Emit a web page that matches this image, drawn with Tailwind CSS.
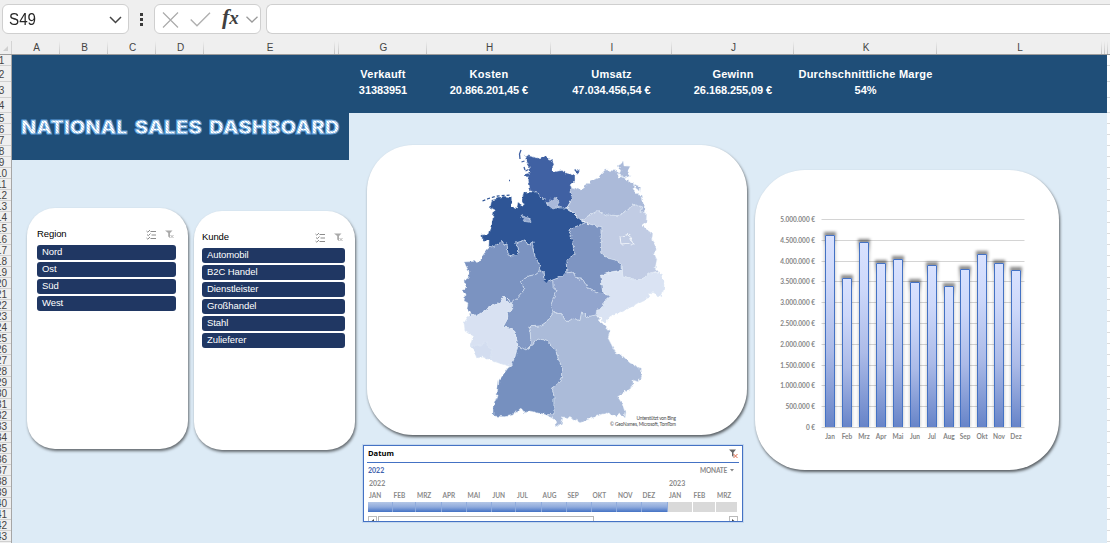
<!DOCTYPE html>
<html lang="de">
<head>
<meta charset="utf-8">
<title>National Sales Dashboard</title>
<script src="https://cdn.jsdelivr.net/npm/@tailwindcss/browser@4"></script>
</head>
<body class="w-[1110px] h-[543px] overflow-hidden bg-[#efefef] font-['Liberation_Sans',sans-serif] flex flex-col">

<!-- Formula bar -->
<header class="h-[41px] shrink-0 flex items-start pt-1 pl-[2px] bg-[#efefef]">
  <div class="w-[127px] h-[30px] rounded-md border border-[#cfcfcf] bg-white flex items-center justify-between pl-[6px] pr-[6px]">
    <span class="text-[16px] leading-none text-[#262626] origin-left scale-x-[.95] mt-px">S49</span>
    <svg class="w-[13px] h-[8px] mt-[2px]" viewBox="0 0 13 8" fill="none" stroke="#444" stroke-width="1.5"><path d="M1 1l5.5 5.5L12 1"/></svg>
  </div>
  <svg class="w-[3px] h-[13px] ml-[11px] mt-[9px]" viewBox="0 0 3 13" fill="#3a3a3a"><path d="M0 0h3v3H0zM0 5h3v3H0zM0 10h3v3H0z"/></svg>
  <div class="w-[107px] h-[30px] ml-[11px] rounded-md border border-[#cfcfcf] bg-white flex items-center pl-[7px]">
    <svg class="w-[17px] h-[17px]" viewBox="0 0 17 17" fill="none" stroke="#ababab" stroke-width="1.2"><path d="M1 1.500l15 15M16 1.500l-15 15"/></svg>
    <svg class="w-[21px] h-[15px] ml-[11px]" viewBox="0 0 21 15" fill="none" stroke="#b0b0b0" stroke-width="1.4"><path d="M.7 7.500l6.300 6.300L20 .8"/></svg>
    <span class="w-[20px] ml-[11px] -mt-[4px] text-[22px] leading-none italic font-bold text-[#404040] font-['Liberation_Serif',serif] whitespace-nowrap">f<span class="text-[19px]">x</span></span>
    <svg class="w-[12px] h-[7px] ml-[4px] mt-[1px]" viewBox="0 0 12 7" fill="none" stroke="#9a9a9a" stroke-width="1.300"><path d="M.5 .7L6 6 11.500 .7"/></svg>
  </div>
  <div class="flex-1 h-[30px] ml-[5px] rounded-l-md border border-r-0 border-[#cfcfcf] bg-white"></div>
</header>

<!-- Column headings -->
<div id="columns" class="h-[14px] shrink-0 flex border-b border-[#9c9c9c] text-[10px] leading-[13px] text-[#444] text-center">
  <div class="w-[12px] shrink-0 flex items-end justify-center pb-[3px] border-r border-[#d4d4d4]"><svg class="w-[5px] h-[5px]" viewBox="0 0 5 5" fill="#d0d0d0"><path d="M5 0v5H0z"/></svg></div>
</div>

<main class="flex-1 min-h-0 flex">
  <!-- Row headings -->
  <div class="w-[12px] shrink-0 overflow-hidden border-r border-[#a6a6a6]">
    <div id="rows" class="w-[19px] -ml-[8px] text-[10px] text-[#444] text-center"></div>
  </div>

  <!-- Sheet -->
  <div class="w-[1095px] shrink-0 bg-[#ddebf6] flex flex-col">
    <section id="kpis" class="h-[58px] shrink-0 bg-[#1f4e78] flex pl-[327px] pt-[11px] text-white text-[11px] font-bold text-center leading-[16px]"></section>

    <div class="flex items-start">
      <!-- Title and slicers -->
      <div class="w-[343px] shrink-0">
        <div class="w-[337px] h-[47px] bg-[#1f4e78]">
          <svg class="w-[337px] h-[30px]" viewBox="12 113 337 30">
            <defs><pattern id="hatch" width="3" height="3" patternUnits="userSpaceOnUse"><rect width="3" height="3" fill="#fff"/><path d="M0 0l3 3" stroke="#c3dbf0" stroke-width="1"/></pattern></defs>
            <g class="font-['Inter',sans-serif] font-black text-[18.500px]" fill="url(#hatch)" stroke="#5b9bd5" stroke-width="0.900">
              <text x="21" y="133.700" textLength="106.500" lengthAdjust="spacingAndGlyphs">NATIONAL</text>
              <text x="134.500" y="133.700" textLength="67.500" lengthAdjust="spacingAndGlyphs">SALES</text>
              <text x="209" y="133.700" textLength="130.500" lengthAdjust="spacingAndGlyphs">DASHBOARD</text>
            </g>
          </svg>
        </div>
        <div class="flex items-start pl-[15px] pt-[48px] gap-[6px]">
          <section class="w-[161px] h-[241px] rounded-[28px] bg-white shadow-[1px_2px_3px_rgba(0,0,0,.55)] pl-[10px] pr-[12px] pt-[19px]">
            <div class="h-[15px] flex items-center pr-[2px] text-[9.500px] text-black">
              <h2 class="flex-1 tracking-[-0.1px]">Region</h2>
              <svg class="w-[11px] h-[10px]" viewBox="0 0 11 10" fill="none" stroke="#8c8c8c" stroke-width="1"><path d="M4.500 1.500H10M5.500 5H10M4.500 8.500H10"/><path d="M.5 1l1.300 1.200L4 0M1 4.500l1.300 1.200L4.500 3.500M.5 8l1.300 1.200L4 7"/></svg>
              <svg class="w-[9px] h-[9px] ml-[8px]" viewBox="0 0 9 9"><path d="M0 .5h7.500L5 3v5L3.200 6.500V3z" fill="#aaa"/><path d="M5.500 5l3 3M8.500 5l-3 3" stroke="#b5b5b5" fill="none"/></svg>
            </div>
            <ul id="region" class="mt-[3px] flex flex-col gap-[2px] text-[9.500px] leading-[14px] tracking-[-0.08px] text-white"></ul>
          </section>
          <section class="w-[161px] h-[239px] mt-[3px] rounded-[28px] bg-white shadow-[1px_2px_3px_rgba(0,0,0,.55)] pl-[8px] pr-[10px] pt-[19px]">
            <div class="h-[15px] flex items-center pr-[2px] text-[9.500px] text-black">
              <h2 class="flex-1 tracking-[-0.1px]">Kunde</h2>
              <svg class="w-[11px] h-[10px]" viewBox="0 0 11 10" fill="none" stroke="#8c8c8c" stroke-width="1"><path d="M4.500 1.500H10M5.500 5H10M4.500 8.500H10"/><path d="M.5 1l1.300 1.200L4 0M1 4.500l1.300 1.200L4.500 3.500M.5 8l1.300 1.200L4 7"/></svg>
              <svg class="w-[9px] h-[9px] ml-[8px]" viewBox="0 0 9 9"><path d="M0 .5h7.500L5 3v5L3.200 6.500V3z" fill="#aaa"/><path d="M5.500 5l3 3M8.500 5l-3 3" stroke="#b5b5b5" fill="none"/></svg>
            </div>
            <ul id="kunde" class="mt-[3px] flex flex-col gap-[2px] text-[9.500px] leading-[14px] tracking-[-0.08px] text-white"></ul>
          </section>
        </div>
      </div>

      <!-- Map and timeline -->
      <div class="w-[392px] shrink-0 pt-[32px]">
        <section class="w-[380px] h-[290px] ml-[12px] rounded-[46px] bg-white shadow-[1px_2px_3px_rgba(0,0,0,.6)]">
          <svg class="w-[380px] h-[290px]" viewBox="367 145 380 290">
            <defs><filter id="rough" filterUnits="userSpaceOnUse" x="440" y="145" width="250" height="290" color-interpolation-filters="sRGB"><feTurbulence type="fractalNoise" baseFrequency="0.25" numOctaves="2" seed="4"/><feDisplacementMap in="SourceGraphic" scale="4" xChannelSelector="R" yChannelSelector="G"/></filter></defs>
            <g filter="url(#rough)" stroke="#dfe8f5" stroke-width="0.500" stroke-linejoin="round">
              <!-- Schleswig-Holstein -->
              <polygon fill="#4061a3" points="524.3,155 530,156 538,158 541,157 547,157.500 552.7,160 554,165 551.7,170 556,171.5 561,170.5 566.7,173 575,175.7 575,180 570,185 572.7,189 570,192 572.7,197.7 566.7,208 560,208 553,205 546.7,203 541.7,196.7 537,192 530,191 529,184 528,177 525,176.7 525,174 530,173 529,166.7 526,160"/>
              <polygon fill="#4061a3" points="574,170 577,169 580,171 577,173.500"/>
              <!-- Niedersachsen -->
              <polygon fill="#2e5596" points="537,192 530,192 524,192 521.7,200 524,205 522,205 518,202 516.7,208 512,206 511.7,197.7 503,197 491.7,200 490,208 494,210 491.7,225 489,234 481.7,235 482,240 489,241 488.7,247.7 495,246 501.7,241.7 504,245 507,244 508,255 513,256 519,253 518,248 515.7,242.7 525,240 528,245 533,241.7 532.7,248 535,256.7 540,265 539,271 544,272 545,280 548,282 553,280 558,278 567,274 566,260 574,255 573,241.7 569,230 575,227 585,223 576.7,216.7 571.7,211.7 566,208 560,208 546.7,203"/>
              <!-- Hamburg -->
              <polygon fill="#a9b9da" points="546.7,204 552,200 556.7,197 558,202 559,207 553,209"/>
              <!-- Bremen -->
              <polygon fill="#93a8d0" points="521,215 526,217.500 530,218 531,222.500 525,221.500"/>
              <!-- Mecklenburg-Vorpommern -->
              <polygon fill="#abbad9" points="570,192 571.7,187 580,190 584,188 588,182.7 598,177.7 605,170 616.7,171 619,177 623,177 628,180.7 634,183 633,190 638,195 642,195 643,203 646,208 645,212.7 640,211.7 641.7,207 633,204 628,210 618,215.7 606.7,215 598,210.7 585,217.7 581.7,220 574,213.500 567,208 573,198"/>
              <polygon fill="#abbad9" points="618,165.700 621,164 623,161 624,166 630,166.200 628,171.500 631,176 625,177.700 619,174.500 621,170"/>
              <polygon fill="#abbad9" points="633,182.700 636,185 640.700,186.700 640,191 636,188.500"/>
              <!-- Brandenburg -->
              <polygon fill="#c1cce4" points="581.7,220 585,217.7 598,210.7 606.7,215 618,215.7 628,210 633,204 641.7,207 640,211.7 646.7,213 646,221.7 642,225 646,229 652.7,234 651.7,240 656,246.7 654,253 657,260 655,268 658,271 650,273 641.7,279 633,280 622.7,276.7 622,265 615,260 606.7,258 601.7,253 600.7,226.7 591.7,225 586,222"/>
              <polygon fill="#c1cce4" stroke="#f4f7fc" stroke-width="0.900" points="620,237 624,236.700 626.700,234 631.700,238 631,240 634,242 631.700,245 627,243.500 621,244"/>
              <!-- Sachsen-Anhalt -->
              <polygon fill="#7e95c2" points="585,223 575,227 569,230 573,241.7 574,255 566,260 567,273 573,272 576,278 583,280 586,285 587,288 597,293 603,294 600.7,275.7 611.7,271.7 622,270 622,265 615,260 606.7,258 601.7,253 600.7,226.7 591.7,225"/>
              <!-- Sachsen -->
              <polygon fill="#dae3f3" points="601,276 611.7,272 622,271 623,277 633,280 642,279 650,273 660,272 664,283 664,288 661.7,296.7 656.7,295 654,292.7 648,292.7 650,297 640,301.7 631.7,306.7 620,313 610,316 605,323 600.7,318 596,315 596.7,309 603,308 604,301.7 610.7,296 602.7,293"/>
              <!-- Thüringen -->
              <polygon fill="#92a5ce" points="567,273 573,272 576,278 583,280 586,285 587,288 597,293 603,294 610.7,296 604,301.7 603,308 596.7,309 596,315 587,317 581.7,312 580,320.7 573,318 568,322 562,315 554,312 550.7,305 552.7,300 557,290 553,287 552.700,280 558,278"/>
              <!-- Nordrhein-Westfalen -->
              <polygon fill="#7b93c1" points="488.7,247.7 495,246 501.7,241.7 504,245 507,244 508,255 513,256 519,253 518,248 515.7,242.7 525,240 528,245 533,241.7 532.7,248 535,256.7 540,265 539,271 534,275 528,276 521.7,280 524,290 518,296.7 511.7,303 508,301 503,296 500,302.7 490,306.7 478,315 470.7,315 467,309 468,303 464,300.7 465,294 461.7,290.7 465.7,288 465,280 468,278 469,271.7 464,262 480,261 483,255"/>
              <!-- Hessen -->
              <polygon fill="#8299c5" points="539,271 544,272 545,280 548,282 552.700,280 553,287 557,290 552.7,300 550.7,305 554,312 546.7,321.7 540.7,326 530,326.7 531,345 526,350 518,346 515,331.7 510,328 503,327 508,318 507,311.7 511.7,310 510.7,304 518,296.7 524,290 521.7,280 528,276 534,275"/>
              <!-- Rheinland-Pfalz -->
              <polygon fill="#d8e1f2" points="478,315 490,306.7 500,302.7 503,296 508,301 511.7,303 511.7,310 507,311.7 508,318 503,327 510,328 515,331.7 517.500,346 515,356.7 510.7,366.7 501.7,364 490,360 482,356 474,350 470,345.7 472.7,338 472,335 465,330 464,323 468,316.7 472,315"/>
              <!-- Saarland -->
              <polygon fill="#d3ddf0" points="470,345.7 480,345 486.7,342 490.7,350 492,355 490,360 483,357 476.7,358 474,350.7"/>
              <!-- Baden-Württemberg -->
              <polygon fill="#7690bf" points="518,346 526,350 532.7,345 537,339 546.7,340 550,345 556,350 558,358 561.7,366.7 561.7,376.7 558,384 551.7,388 554,395 554,413 546.7,415 538,413 530,411 525,413 521.7,409 515,411.7 513,415 505,416.7 493,416 493,406.7 496.7,396.7 499,380 508,368 511,366 515,357"/>
              <!-- Bayern -->
              <polygon fill="#abbbd9" points="554,312 562,315 568,322 573,318 580,320.7 581.7,312 587,317 596,315 603,324 610,331.7 608,338 615,351.7 621.7,355 630,363 640,368 641.7,378 638,381.7 633,380 633,386 625,391.7 617.7,396.7 621.7,403 625,411.7 624,418 620,413 615,416 606.7,413 600,415 591.7,418 580,422.7 571.7,418 563,417 561.7,423 557,426.7 555,420 550,417 546.700,415 554,413 554,395 551.7,388 558,384 561.7,376.7 561.7,366.7 558,358 556,350 550,345 546.7,340 537,339 532.7,345 531,345 530,326.7 540.7,326 546.7,321.7"/>
            </g>
            <path fill="none" stroke="#4061a3" stroke-width="1.300" d="M521 150l-1.500 4 .5 5M521.500 162l3-1M524 167l1 3M527.500 164l2 3M525.500 171l3-1.500M509 180.500h1"/>
            <path fill="none" stroke="#2e5596" stroke-width="1.200" stroke-dasharray="3 2" d="M482.500 201l6-2.500 8-2.500 14-1"/>
            <path fill="#2e5596" d="M543.500 280l3 3 2-3z"/>
            <g fill="#4a4a4a" class="font-['Lato',sans-serif] text-[4.800px]" text-anchor="end"><text x="676" y="420" textLength="39.500">Unterstützt von Bing</text><text x="676" y="426" textLength="66">© GeoNames, Microsoft, TomTom</text></g>
          </svg>
        </section>

        <section class="w-[380px] h-[77px] ml-[8px] mt-[10px] border border-[#4472c4] outline outline-[#c5d8ee] bg-white overflow-hidden px-[3px] flex flex-col">
          <div class="h-[17px] shrink-0 border-b border-[#4472c4] flex items-center justify-between pl-px pr-px">
            <h2 class="text-[7.600px] leading-none font-bold text-black font-['Open_Sans',sans-serif] -mt-px">Datum</h2>
            <svg class="w-[9px] h-[10px]" viewBox="0 0 9 10"><path d="M0 .5h7L4.500 3.500V8L3 7V3.500z" fill="#666"/><path d="M4.500 5l4 4M8.500 5l-4 4" stroke="#dc6a4a" fill="none"/></svg>
          </div>
          <div class="h-[15px] shrink-0 flex items-center justify-between px-px text-[7px] font-['Lato',sans-serif]">
            <span class="font-bold text-[#3f62ad]">2022</span>
            <span class="flex items-center gap-[3px] pr-[4px] text-[6.500px] tracking-[-0.2px] font-bold text-[#8a8a8a]">MONATE <svg class="w-[4px] h-[3px]" viewBox="0 0 4 3" fill="#888"><path d="M0 0h4L2 2.500z"/></svg></span>
          </div>
          <div class="h-[11px] shrink-0 flex items-center text-[7px] font-bold text-[#8a8a8a] font-['Lato',sans-serif]"><span class="w-[300px] pl-[2px]">2022</span><span class="pl-[2px]">2023</span></div>
          <div id="months" class="shrink-0 flex pl-px text-[6.500px] font-bold text-[#8a8a8a] font-['Lato',sans-serif]"></div>
          <div class="shrink-0 mt-[4px] mx-px flex h-[10px]">
            <div class="w-[9px] border border-[#bbb] flex pt-[2px] justify-center"><svg class="w-[3px] h-[5px]" viewBox="0 0 3 5" fill="#444"><path d="M3 0v5L0 2.500z"/></svg></div>
            <div class="w-[216px] ml-px border border-[#b5b5b5]"></div>
            <div class="flex-1"></div>
            <div class="w-[9px] border border-[#bbb] flex pt-[2px] justify-center"><svg class="w-[3px] h-[5px]" viewBox="0 0 3 5" fill="#444"><path d="M0 0v5l3-2.500z"/></svg></div>
          </div>
        </section>
      </div>

      <!-- Monthly chart -->
      <section class="w-[304px] h-[300px] ml-[8px] mt-[57px] rounded-[50px] bg-white shadow-[1px_2px_3px_rgba(0,0,0,.6)]">
        <svg id="chart" class="w-[304px] h-[300px]" viewBox="755 170 304 300">
          <defs>
            <linearGradient id="bar" x1="0" y1="0" x2="0" y2="1"><stop offset="0" stop-color="#d9e2ff"/><stop offset=".25" stop-color="#cdd8fa"/><stop offset=".6" stop-color="#acbbe8"/><stop offset="1" stop-color="#6784c8"/></linearGradient>
            <linearGradient id="shade" gradientUnits="userSpaceOnUse" x1="0" y1="0" x2="0" y2="14"><stop offset="0" stop-color="#000" stop-opacity=".5"/><stop offset="1" stop-color="#000" stop-opacity=".16"/></linearGradient>
            <filter id="blur" x="-80%" y="-10%" width="260%" height="120%"><feGaussianBlur stdDeviation="1.400"/></filter>
          </defs>
          <g id="grid" stroke="#d4d4d4" stroke-width="1"></g>
          <g id="ylabels" class="font-['Lato',sans-serif] text-[6.500px] font-bold" fill="#858585" text-anchor="end"></g>
          <g id="bars"></g>
          <g id="xlabels" class="font-['Lato',sans-serif] text-[6.500px] font-bold" fill="#858585" text-anchor="middle"></g>
        </svg>
      </section>
    </div>
  </div>
  <!-- Empty cells right of the dashboard -->
  <div id="edge" class="flex-1 bg-white"></div>
</main>

<script>
const el = id => document.getElementById(id);

const cols = [['A',48],['B',48],['C',48],['D',48],['E',131],['',4],['G',88],['H',124],['I',121],['J',122],['K',143],['L',165],['',3],['',3]];
el('columns').insertAdjacentHTML('beforeend', cols.map(([n, w]) =>
  `<div class="shrink-0 h-[13px] pl-px bg-[linear-gradient(to_bottom,#efefef,#c4c4c4)] bg-[length:1px_100%] bg-no-repeat bg-right" style="width:${w}px">${n}</div>`).join(''));

const heights = [11, 16, 16, 15];
for (let i = 1; i <= 43; i++) {
  const h = heights[i - 1] || 11;
  el('rows').insertAdjacentHTML('beforeend', `<div class="border-b border-[#d0d0d0] flex items-center justify-center leading-none pt-[2px]" style="height:${h}px">${i}</div>`);
  el('edge').insertAdjacentHTML('beforeend', `<div class="border-b border-[#dcdcdc]" style="height:${h}px"></div>`);
}

const kpis = [['Verkauft','31383951',88],['Kosten','20.866.201,45 €',124],['Umsatz','47.034.456,54 €',121],['Gewinn','26.168.255,09 €',122],['Durchschnittliche Marge','54%',143]];
el('kpis').innerHTML = kpis.map(([a, b, w]) => `<div class="shrink-0 whitespace-nowrap" style="width:${w}px"><div class="tracking-[0.250px]">${a}</div><div class="tracking-[-0.080px]">${b}</div></div>`).join('');

const item = t => `<li class="h-[15px] rounded-[3px] bg-[#203763] pl-[5px]">${t}</li>`;
el('region').innerHTML = ['Nord','Ost','Süd','West'].map(item).join('');
el('kunde').innerHTML = ['Automobil','B2C Handel','Dienstleister','Großhandel','Stahl','Zulieferer'].map(item).join('');

const months = [['JAN',24.5],['FEB',23.5],['MRZ',25.5],['APR',25],['MAI',25],['JUN',24.5],['JUL',25.5],['AUG',25],['SEP',25],['OKT',25.5],['NOV',24.5],['DEZ',26.5],['JAN',24.5],['FEB',23.5],['MRZ',22]];
el('months').innerHTML = months.map(([m, w], i) => `<div class="shrink-0" style="width:${w}px"><div class="h-[13px] pl-px leading-[13px]">${m}</div><div class="h-[10px] border-r ${i < 12 ? 'border-[#8fabdd] bg-linear-to-b from-[#b4c7e7] via-[#8faadc] to-[#4472c4]' : 'border-white bg-[#d9d9d9]'}"></div></div>`).join('');

for (let i = 0; i <= 10; i++) {
  const y = Math.round(219 + i * 20.8) + .5;
  const v = (10 - i) * 500000;
  el('grid').innerHTML += `<path d="M821.500 ${y}H1024.500"/>`;
  el('ylabels').innerHTML += `<text x="815" y="${y + 2.3}">${v.toLocaleString('de-DE')} €</text>`;
}
const tops = [['Jan',235],['Feb',278],['Mrz',242],['Apr',263],['Mai',259],['Jun',282],['Jul',265],['Aug',286],['Sep',269],['Okt',254],['Nov',263],['Dez',270]];
tops.forEach(([m, t], i) => {
  const x = Math.round(825 + i * 16.93);
  el('bars').innerHTML += `<g transform="translate(${x - 1} ${t - 3})"><rect width="12" height="${430 - t}" fill="url(#shade)" filter="url(#blur)"/></g><rect x="${x}" y="${t}" width="10" height="${427 - t}" fill="url(#bar)"/><path d="M${x + .5} 427V${t + .5}h9V427" fill="none" stroke="#4472c4"/>`;
  el('xlabels').innerHTML += `<text x="${x + 5}" y="439">${m}</text>`;
});
</script>
</body>
</html>
